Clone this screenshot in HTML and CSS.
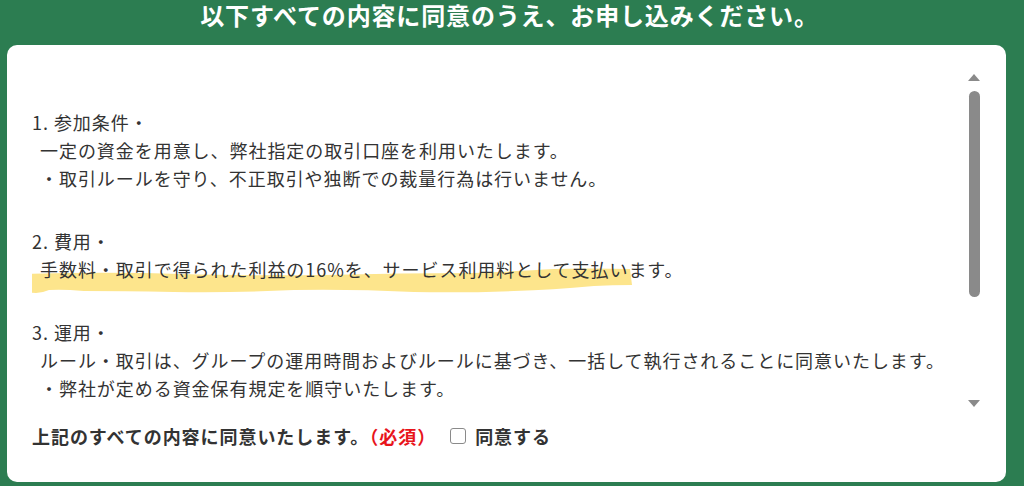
FILE: index.html
```html
<!DOCTYPE html>
<html lang="ja">
<head>
    <meta charset="UTF-8">
    <meta name="viewport" content="width=device-width, initial-scale=1.0">
    <title>お申し込み</title>
    <link rel="stylesheet" href="styles.css">
</head>
<body>
    <p class="lead">以下すべての内容に同意のうえ、お申し込みください。</p>

    <div class="card">
        <div class="terms-box">
            <div class="terms">
                <div class="term">
                    <p class="term-head">1. 参加条件・</p>
                    <p class="term-line">一定の資金を用意し、弊社指定の取引口座を利用いたします。</p>
                    <p class="term-line">・取引ルールを守り、不正取引や独断での裁量行為は行いません。</p>
                </div>

                <div class="term">
                    <p class="term-head">2. 費用・</p>
                    <p class="term-line marked">手数料・取引で得られた利益の16%を、サービス利用料として支払います。
                        <!-- hand drawn marker under the fee line -->
                        <svg class="marker" width="612" height="26" viewBox="0 0 612 26" aria-hidden="true">
                            <path d="M2 6 Q60 4 122 5 Q210 8 302 7 Q380 5 452 5 Q500 3 532 1 Q570 0 608 1 L610 17 Q590 17 572 18 Q530 22 492 23 Q440 25 392 24 Q330 21 272 22 Q210 25 152 24 Q100 23 62 23 Q40 21 27 22 Q20 25 14 25 Q6 25 3 23 Z" fill="#fde58c"/>
                        </svg>
                    </p>
                </div>

                <div class="term">
                    <p class="term-head">3. 運用・</p>
                    <p class="term-line">ルール・取引は、グループの運用時間およびルールに基づき、一括して執行されることに同意いたします。</p>
                    <p class="term-line">・弊社が定める資金保有規定を順守いたします。</p>
                </div>
            </div>

            <!-- scrollbar for the terms list -->
            <div class="scrollbar">
                <span class="arrow-up"></span>
                <span class="thumb"></span>
                <span class="arrow-down"></span>
            </div>
        </div>

        <div class="agree">
            <span class="agree-text">上記のすべての内容に同意いたします。<span class="required">（必須）</span></span>
            <label class="check">
                <span class="box"></span>
                <span>同意する</span>
            </label>
        </div>
    </div>
</body>
</html>
```

FILE: styles.css
```css
body{
    font-family: "Noto Sans CJK JP", "Noto Sans", sans-serif;
    margin: 0px;
    padding: 0 18px 0 7px;
    background-color: #2c7d51;
    color: #333;
}
.lead{
    margin: 0 0 15px 6px;
    font-size: 24px;
    line-height: 30px;
    font-weight: bold;
    color: #fff;
    text-align: center;
    letter-spacing: 0.85px;
}
.card{
    background-color: #fff;
    border-radius: 10px;
    padding: 24px 24px 32px 25px;
    box-sizing: border-box;
    height: 437px;
}
.terms-box{
    display: flex;
    height: 342px;
}
.terms{
    flex: 1;
    position: relative;
    z-index: 0;
    overflow: hidden;
    padding-top: 39px;
    font-size: 18px;
    line-height: 28px;
    letter-spacing: 0.95px;
}
.term{
    margin-bottom: 35px;
}
.term p{
    margin: 0;
}
.term-line{
    padding-left: 8px;
}
.marked{
    position: relative;
}
.marker{
    position: absolute;
    left: -10px;
    top: 13px;
    z-index: -1;
}

/* scrollbar */
.scrollbar{
    width: 16px;
    display: flex;
    flex-direction: column;
    align-items: center;
    padding: 5px 0 4px;
    box-sizing: border-box;
}
.arrow-up,
.arrow-down{
    width: 0;
    height: 0;
    border-left: 6px solid transparent;
    border-right: 6px solid transparent;
}
.arrow-up{
    border-bottom: 7px solid #8a8a8a;
}
.arrow-down{
    margin-top: auto;
    border-top: 7px solid #8a8a8a;
}
.thumb{
    margin-top: 10px;
    width: 11px;
    height: 206px;
    border-radius: 6px;
    background-color: #8a8a8a;
}

.agree{
    display: flex;
    align-items: center;
    gap: 14px;
    margin-top: 11px;
    font-size: 18px;
    line-height: 28px;
    font-weight: bold;
    letter-spacing: 0.95px;
}
.required{
    color: #e8141b;
}
.check{
    display: flex;
    align-items: center;
    gap: 9px;
    cursor: pointer;
}
.box{
    flex: none;
    width: 16px;
    height: 16px;
    box-sizing: border-box;
    border: 1.5px solid #8a8a8a;
    border-radius: 3px;
    background: #fff;
}
```
